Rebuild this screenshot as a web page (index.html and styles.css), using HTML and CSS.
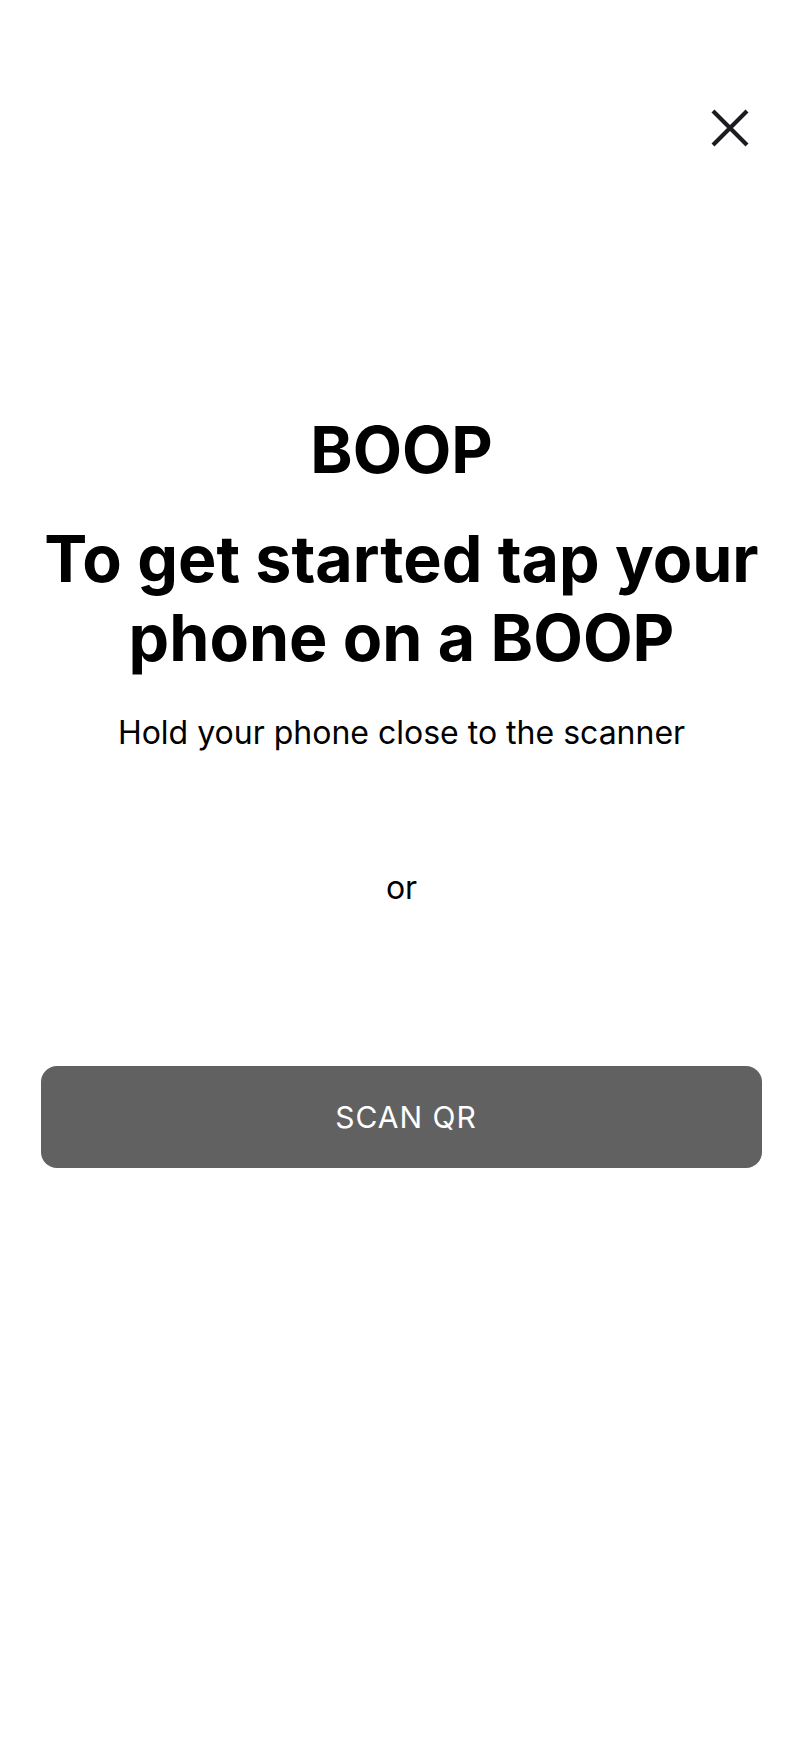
FILE: index.html
```html
<!DOCTYPE html>
<html lang="en">
<head>
<meta charset="utf-8">
<title>BOOP</title>
<link rel="stylesheet" href="styles.css">
</head>
<body>
<div class="screen">
  <header class="topbar">
    <button class="close" aria-label="Close">
      <svg width="40" height="40" viewBox="0 0 40 40" aria-hidden="true">
        <path d="M3 3 L37 37 M37 3 L3 37" stroke="#1c1b1f" stroke-width="4.2" fill="none"/>
      </svg>
    </button>
  </header>
  <main class="content">
    <h1 class="brand">BOOP</h1>
    <h2 class="headline">To get started tap your phone on a BOOP</h2>
    <p class="hint">Hold your phone close to the scanner</p>
    <p class="or">or</p>
    <button class="scan">SCAN QR</button>
  </main>
</div>
</body>
</html>
```

FILE: styles.css
```css
html, body {
  margin: 0;
  padding: 0;
  background: #ffffff;
}
body {
  font-family: Inter, "Noto Sans", sans-serif;
  color: #000000;
}
.screen {
  display: flex;
  flex-direction: column;
  min-height: 1748px;
}
.topbar {
  display: flex;
  justify-content: flex-end;
  padding: 108px 54px 0 0;
}
.close {
  display: block;
  width: 40px;
  height: 40px;
  padding: 0;
  margin: 0;
  border: 0;
  background: none;
}
.close svg {
  display: block;
}
.content {
  display: flex;
  flex-direction: column;
  align-items: stretch;
  padding: 0 42px 0 41px;
  text-align: center;
}
.brand {
  margin: 265px 0 0;
  font-size: 64px;
  line-height: 74px;
  font-weight: 700;
}
.headline {
  margin: 33px 0 0;
  font-size: 64.5px;
  line-height: 79px;
  font-weight: 700;
}
.hint {
  margin: 38px 0 0;
  font-size: 32px;
  line-height: 34px;
  font-weight: 400;
}
.or {
  margin: 121px 0 0;
  font-size: 32px;
  line-height: 34px;
  font-weight: 400;
}
.scan {
  margin: 161px 0 0;
  height: 102px;
  padding: 0 0 0 9px;
  border: 0;
  border-radius: 16px;
  background: #616161;
  color: #ffffff;
  font-family: Inter, "Noto Sans", sans-serif;
  font-size: 30px;
  font-weight: 400;
  letter-spacing: 1px;
}
```
